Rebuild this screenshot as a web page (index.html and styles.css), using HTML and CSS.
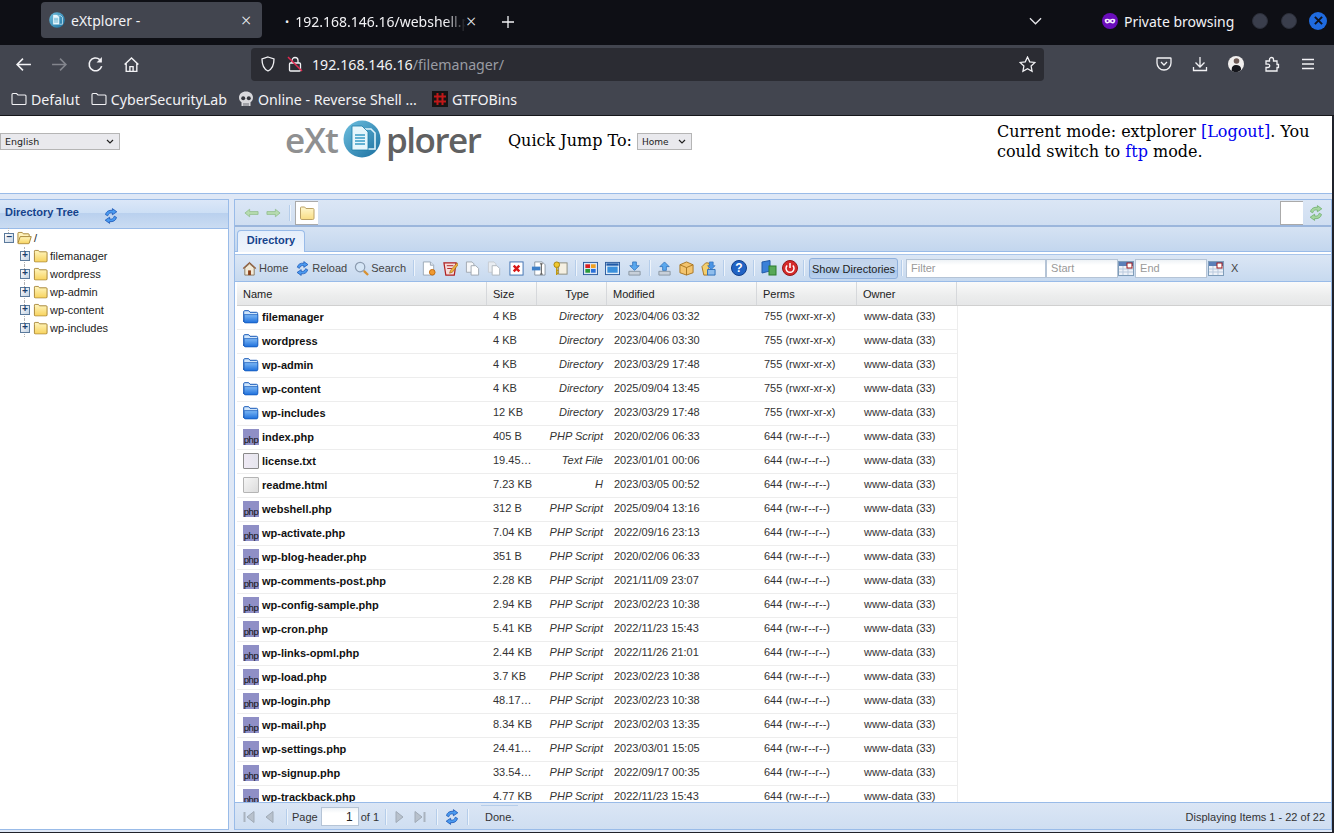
FILE: index.html
```html
<!DOCTYPE html>
<html lang="en">
<head>
<meta charset="utf-8">
<title>eXtplorer</title>
<link rel="stylesheet" href="styles.css">
</head>
<body>
<svg class="defs" width="0" height="0" aria-hidden="true">
  <defs>
    <linearGradient id="gy" x1="0" y1="0" x2="0" y2="1"><stop offset="0" stop-color="#fff6c0"/><stop offset="1" stop-color="#f7d25c"/></linearGradient>
    <linearGradient id="gb" x1="0" y1="0" x2="0" y2="1"><stop offset="0" stop-color="#7db8f5"/><stop offset="1" stop-color="#1d6fdc"/></linearGradient>
    <linearGradient id="gd" x1="0" y1="0" x2="1" y2="1"><stop offset="0" stop-color="#6fc0e0"/><stop offset="1" stop-color="#1a6f9f"/></linearGradient>
    <symbol id="folder" viewBox="0 0 16 14"><path d="M1.5 3V1.8q0-.8.8-.8h3.4l1.2 1.5h7q1.100 0 1.100 1v8.700q0 1.300-1.300 1.300H2.800q-1.300 0-1.300-1.300z" fill="url(#gy)" stroke="#a58334"/></symbol>
    <symbol id="folderopen" viewBox="0 0 16 14"><path d="M1 12V2q0-1 1-1h3.500l1.200 1.500H12q1 0 1 1V5" fill="#fff3bd" stroke="#a58334"/><path d="M1 12.500 3.400 5.500h11.800L13 12.500q-.3.700-1 .7H2q-1 0-1-.7z" fill="url(#gy)" stroke="#a58334"/></symbol>
    <symbol id="bfolder" viewBox="0 0 16 14"><path d="M.7 11.700V1.700q0-1 1-1h4l1.300 1.600h6.400q1.200 0 1.200 1.100v7.300q0 1.600-1.600 1.600H2.300q-1.600 0-1.600-1.600z" fill="#cfe5fb" stroke="#1458b8"/><path d="M1.200 4.600h13.600v7q0 1.300-1.300 1.300H2.500q-1.300 0-1.300-1.300z" fill="url(#gb)" stroke="#1458b8" stroke-width=".7"/></symbol>
    <symbol id="reload" viewBox="0 0 16 16"><path d="M2.500 6.600C3 3.600 6 1.800 9.400 2.400V.6l4.400 3.200-4.400 3V5C7 4.400 5.300 5.600 4.700 7.800z" fill="#4a9af0" stroke="#1a55b5" stroke-width=".8"/><path d="M13.500 9.400c-.5 3-3.500 4.800-6.900 4.200v1.800L2.200 12.200l4.400-3V11c2.400.6 4.100-.6 4.700-2.800z" fill="#4a9af0" stroke="#1a55b5" stroke-width=".8"/></symbol>
    <symbol id="greload" viewBox="0 0 16 16"><path d="M2.500 6.600C3 3.600 6 1.800 9.400 2.400V.6l4.400 3.200-4.400 3V5C7 4.400 5.300 5.600 4.700 7.800z" fill="#a5d6a0" stroke="#6fae6c" stroke-width=".8"/><path d="M13.500 9.400c-.5 3-3.500 4.800-6.900 4.200v1.800L2.200 12.200l4.400-3V11c2.400.6 4.100-.6 4.700-2.800z" fill="#a5d6a0" stroke="#6fae6c" stroke-width=".8"/></symbol>
    <symbol id="doc" viewBox="0 0 16 16"><path d="M2.500 1h7.500l3.500 3.500V15h-11z" fill="#fff" stroke="#9aa7b5"/><path d="M10 1v3.500h3.500" fill="#dfe6ee" stroke="#9aa7b5"/></symbol>
    <symbol id="logodoc" viewBox="0 0 38 38"><circle cx="19" cy="19" r="18.500" fill="url(#gd)"/><path d="M22 9h6l4 4v16h-7" fill="none" stroke="#dff3fb" stroke-width="1.600"/><path d="M9 6h10l6 6v18H9z" fill="#e6f6fc" stroke="#1c7da8" stroke-width=".8"/><path d="M12 15h10M12 18h10M12 21h10M12 24h10" stroke="#3a9cc5" stroke-width="1.300"/></symbol>
    <symbol id="cal" viewBox="0 0 16 16"><rect x=".5" y="1.500" width="15" height="14" fill="#eef2f8" stroke="#7f9db9"/><rect x="1" y="2" width="14" height="4" fill="#5b7fb8"/><path d="M1 9h14M1 12h14M5 6v9M10 6v9" stroke="#b9c9dd"/><rect x="9" y="3" width="5" height="5" fill="#fff" stroke="#a01818"/></symbol>
    <symbol id="first" viewBox="0 0 16 16"><path d="M3.500 3v10" stroke="#a9b3bf" stroke-width="2"/><path d="M13 2.500v11L6 8z" fill="#b8c1cc" stroke="#a0aab6"/></symbol>
    <symbol id="prev" viewBox="0 0 16 16"><path d="M11 2.500v11L4 8z" fill="#b8c1cc" stroke="#a0aab6"/></symbol>
    <symbol id="next" viewBox="0 0 16 16"><path d="M5 2.500v11L12 8z" fill="#b8c1cc" stroke="#a0aab6"/></symbol>
    <symbol id="last" viewBox="0 0 16 16"><path d="M12.500 3v10" stroke="#a9b3bf" stroke-width="2"/><path d="M3 2.500v11L10 8z" fill="#b8c1cc" stroke="#a0aab6"/></symbol>
  </defs>
</svg>

<div class="browser">
  <div class="tabbar">
    <div class="tab tab-active">
      <svg class="fav" viewBox="0 0 38 38"><use href="#logodoc"/></svg>
      <span class="tab-title">eXtplorer -</span>
      <span class="tab-x">×</span>
    </div>
    <div class="tab tab-idle">
      <span class="tab-dot">•</span>
      <span class="tab-title fade">192.168.146.16/webshell.php</span>
      <span class="tab-x">×</span>
    </div>
    <svg class="newtab" viewBox="0 0 12 12"><path d="M6 0v12M0 6h12" stroke="#f2f2f5" stroke-width="1.300"/></svg>
    <svg class="chev" viewBox="0 0 14 8"><path d="M1 1l6 6 6-6" fill="none" stroke="#e6e6ea" stroke-width="1.400"/></svg>
    <svg class="mask" viewBox="0 0 16 16"><circle cx="8" cy="8" r="8" fill="#6a0dbb"/><path d="M2.800 6.400c1.500-.8 3.600-.7 5.200.1 1.600-.8 3.700-.9 5.200-.1.600 2.300-.7 4-2.600 4-1.200 0-1.900-1-2.600-1s-1.400 1-2.600 1c-1.900 0-3.200-1.700-2.600-4z" fill="#f4ecfb"/><circle cx="5.500" cy="8" r="1" fill="#6a0dbb"/><circle cx="10.500" cy="8" r="1" fill="#6a0dbb"/></svg>
    <span class="private">Private browsing</span>
    <span class="winbtn"></span>
    <span class="winbtn"></span>
    <span class="winbtn winclose"><svg viewBox="0 0 10 10"><path d="M1 1l8 8M9 1l-8 8" stroke="#10131c" stroke-width="2.200"/></svg></span>
  </div>

  <div class="navbar">
    <svg class="nav-ico" viewBox="0 0 16 16"><path d="M15 8H2M7.500 2.500 2 8l5.500 5.500" fill="none" stroke="#f2f2f5" stroke-width="1.500"/></svg>
    <svg class="nav-ico" viewBox="0 0 16 16"><path d="M1 8h13M8.500 2.500 14 8l-5.500 5.500" fill="none" stroke="#83858d" stroke-width="1.500"/></svg>
    <svg class="nav-ico" viewBox="0 0 16 16"><path d="M13.800 9.500A6 6 0 1 1 12 3.400" fill="none" stroke="#f2f2f5" stroke-width="1.500"/><path d="M14 1v5H9z" fill="#f2f2f5"/></svg>
    <svg class="nav-ico" viewBox="0 0 16 16"><path d="M1.500 8 8 1.800 14.500 8M3 7v7.500h10V7M6.500 14.500V10h3v4.500" fill="none" stroke="#f2f2f5" stroke-width="1.300"/></svg>
    <div class="urlbar">
      <svg class="url-ico" viewBox="0 0 16 16"><path d="M8 1l6 2c0 6-1.500 10-6 12C3.500 13 2 9 2 3z" fill="none" stroke="#f2f2f5" stroke-width="1.300"/></svg>
      <svg class="url-ico" viewBox="0 0 16 16"><rect x="2.500" y="7" width="11" height="8" rx="1" fill="none" stroke="#f2f2f5" stroke-width="1.300"/><path d="M5 7V4.500a3 3 0 0 1 6 0V7" fill="none" stroke="#f2f2f5" stroke-width="1.300"/><path d="M1 1l14 14" stroke="#e22850" stroke-width="1.500"/></svg>
      <span class="url"><span class="url-host">192.168.146.16</span>/filemanager/</span>
      <svg class="url-star" viewBox="0 0 16 16"><path d="M8 1l2.100 4.500 4.900.6-3.600 3.400.9 4.900L8 11.900 3.700 14.400l.9-4.900L1 6.100l4.900-.6z" fill="none" stroke="#f2f2f5" stroke-width="1.200"/></svg>
    </div>
    <div class="nav-right">
      <svg class="nav-ico2" viewBox="0 0 16 16"><path d="M1.500 2h13q.5 0 .5.5V7a7 7 0 0 1-14 0V2.500q0-.5.500-.5z" fill="none" stroke="#f2f2f5" stroke-width="1.300"/><path d="M5 6l3 3 3-3" fill="none" stroke="#f2f2f5" stroke-width="1.300"/></svg>
      <svg class="nav-ico2" viewBox="0 0 16 16"><path d="M8 1v10M3.500 6.500 8 11l4.500-4.500M1.500 11v3.500h13V11" fill="none" stroke="#f2f2f5" stroke-width="1.300"/></svg>
      <svg class="nav-ico2" viewBox="0 0 16 16"><circle cx="8" cy="8" r="8" fill="#f1efee"/><path d="M3.800 15c-.5-4 1-6 4.200-6s5.500 1.500 5 5a8 8 0 0 1-9.200 1z" fill="#15161c"/><circle cx="8.500" cy="5" r="2.800" fill="#6d5a55"/></svg>
      <svg class="nav-ico2" viewBox="0 0 16 16"><path d="M2 5h3.500V3.500a2 2 0 0 1 4 0V5H13v3.500h1.500v3H13V15H2v-3.500h2a1.700 1.700 0 0 0 0-3.400H2z" fill="none" stroke="#f2f2f5" stroke-width="1.300"/></svg>
      <svg class="nav-ico2" viewBox="0 0 16 16"><path d="M2 3.500h12M2 8h12M2 12.500h12" stroke="#f2f2f5" stroke-width="1.300"/></svg>
    </div>
  </div>

  <div class="bookmarks">
    <span class="bm"><svg class="bm-ico" viewBox="0 0 16 14"><path d="M1 2.500q0-1 1-1h3.500L7 3h7q1 0 1 1v7.500q0 1-1 1H2q-1 0-1-1z" fill="none" stroke="#f2f2f5" stroke-width="1.100"/></svg>Defalut</span>
    <span class="bm"><svg class="bm-ico" viewBox="0 0 16 14"><path d="M1 2.500q0-1 1-1h3.500L7 3h7q1 0 1 1v7.500q0 1-1 1H2q-1 0-1-1z" fill="none" stroke="#f2f2f5" stroke-width="1.100"/></svg>CyberSecurityLab</span>
    <span class="bm"><svg class="bm-ico" viewBox="0 0 16 16"><path d="M8 .5c4 0 7 2.500 7 6.200 0 2.300-1.200 3.700-2.500 4.500V15h-9v-3.800C2.200 10.400 1 9 1 6.700 1 3 4 .5 8 .5z" fill="#d8d8dc"/><circle cx="5.200" cy="7.200" r="2" fill="#34363d"/><circle cx="10.800" cy="7.200" r="2" fill="#34363d"/><path d="M6 12v3M8 12v3M10 12v3" stroke="#6a6c74"/></svg>Online - Reverse Shell ...</span>
    <span class="bm"><svg class="bm-ico" viewBox="0 0 16 16"><rect width="16" height="16" fill="#151515"/><path d="M5.500 2v12M10.500 2v12M2 5.500h12M2 10.500h12" stroke="#c01818" stroke-width="2"/></svg>GTFOBins</span>
  </div>

  <div class="page">
    <header class="head">
      <div class="head-lang">
        <select class="lang"><option>English</option></select>
      </div>
      <div class="logo">
        <span class="logo-a">eXt</span>
        <svg class="logo-mark" viewBox="0 0 38 38"><use href="#logodoc"/></svg>
        <span class="logo-b">plorer</span>
      </div>
      <div class="jump">Quick Jump To:<select class="jump-sel"><option>Home</option></select></div>
      <div class="mode">Current mode: extplorer <a class="lnk">[Logout]</a>. You could switch to <a class="lnk">ftp</a> mode.</div>
    </header>

    <div class="workspace">
      <aside class="tree-panel">
        <div class="tree-head">
          <span class="tree-title">Directory Tree</span>
          <svg class="tree-reload" viewBox="0 0 16 16"><use href="#reload"/></svg>
        </div>
        <div class="tree-body">
          <div class="node root"><span class="exp">−</span><svg class="t-folder" viewBox="0 0 16 14"><use href="#folderopen"/></svg><span>/</span></div>
          <div class="node"><span class="exp">+</span><svg class="t-folder" viewBox="0 0 16 14"><use href="#folder"/></svg><span>filemanager</span></div>
          <div class="node"><span class="exp">+</span><svg class="t-folder" viewBox="0 0 16 14"><use href="#folder"/></svg><span>wordpress</span></div>
          <div class="node"><span class="exp">+</span><svg class="t-folder" viewBox="0 0 16 14"><use href="#folder"/></svg><span>wp-admin</span></div>
          <div class="node"><span class="exp">+</span><svg class="t-folder" viewBox="0 0 16 14"><use href="#folder"/></svg><span>wp-content</span></div>
          <div class="node"><span class="exp">+</span><svg class="t-folder" viewBox="0 0 16 14"><use href="#folder"/></svg><span>wp-includes</span></div>
        </div>
      </aside>

      <main class="main">
        <div class="locbar">
          <svg class="loc-arrow" viewBox="0 0 16 10"><path d="M1 5l5-4v2.500h9v3H6V9z" fill="#b7dcb0" stroke="#8dbb88" stroke-width=".8"/></svg>
          <svg class="loc-arrow" viewBox="0 0 16 10"><path d="M15 5l-5-4v2.500H1v3h9V9z" fill="#b7dcb0" stroke="#8dbb88" stroke-width=".8"/></svg>
          <span class="sep loc-sep"></span>
          <span class="loc-box"><svg class="loc-folder" viewBox="0 0 16 14"><use href="#folder"/></svg></span>
          <span class="loc-space"></span>
          <span class="loc-box2"></span>
          <svg class="loc-reload" viewBox="0 0 16 16"><use href="#greload"/></svg>
        </div>

        <div class="tabstrip"><span class="dir-tab">Directory</span></div>

        <div class="toolbar">
          <span class="tb-btn tb-home"><svg class="ti" viewBox="0 0 16 16"><path d="M1 8 8 1.500 15 8" fill="#c46a3a" stroke="#7a4a2a"/><path d="M3 7.500 8 3l5 4.500V15H3z" fill="#f2ead8" stroke="#8a7a60"/><rect x="6.500" y="10" width="3" height="5" fill="#8a3f1a"/></svg>Home</span>
          <span class="tb-btn"><svg class="ti" viewBox="0 0 16 16"><use href="#reload"/></svg>Reload</span>
          <span class="tb-btn"><svg class="ti" viewBox="0 0 16 16"><circle cx="6.500" cy="6.500" r="5" fill="#d6e6f6" stroke="#8c9cb0" stroke-width="1.300"/><path d="M10.500 10.500 15 15" stroke="#d89030" stroke-width="2.400"/></svg>Search</span>
          <span class="sep"></span>
          <span class="ib"><svg class="ti" viewBox="0 0 16 16"><use href="#doc"/><circle cx="12" cy="12" r="3" fill="#f09a30" stroke="#c06a10"/></svg></span>
          <span class="ib"><svg class="ti" viewBox="0 0 16 16"><path d="M1 2h13l-2 13H3z" fill="#f6dcdc" stroke="#b02020" stroke-width="1.300"/><path d="M4 5h7M4.500 8h5" stroke="#b02020"/><path d="M15 2 8 10l-1 3 3-1 6-8z" fill="#f0b040" stroke="#a06a10" stroke-width=".7"/></svg></span>
          <span class="ib"><svg class="ti" viewBox="0 0 16 16"><path d="M1.500 1h6l2 2v9h-8z" fill="#f6f7f9" stroke="#a0a8b0"/><path d="M6.500 5h5l3 3v7h-8z" fill="#fff" stroke="#a0a8b0"/></svg></span>
          <span class="ib"><svg class="ti" viewBox="0 0 16 16"><path d="M1.500 1h6l2 2v9h-8z" fill="#e9edf2" stroke="#c6ccd2"/><path d="M5.500 5h5l3 3v7h-8z" fill="#fff" stroke="#aeb5bc"/></svg></span>
          <span class="ib"><svg class="ti" viewBox="0 0 16 16"><rect x="1" y="1" width="14" height="14" fill="#fff" stroke="#3d6fb0"/><path d="M5 5l6 6M11 5l-6 6" stroke="#d81818" stroke-width="2.600"/></svg></span>
          <span class="ib"><svg class="ti" viewBox="0 0 16 16"><path d="M4 1h8l3 3v11H4z" fill="#fff" stroke="#8a96a2"/><rect x="1" y="6" width="9" height="4" fill="#3d7fc8"/><path d="M11 3v11M9.500 3h3M9.500 14h3" stroke="#444" fill="none"/></svg></span>
          <span class="ib"><svg class="ti" viewBox="0 0 16 16"><rect x="6" y="2" width="9" height="12" fill="#f5f0e2" stroke="#8a8a7a"/><circle cx="4" cy="4" r="3" fill="#f0c830" stroke="#a8820c"/><path d="M4 6v9M4 10h2M4 13h2" stroke="#c09810" stroke-width="1.600"/></svg></span>
          <span class="sep"></span>
          <span class="ib"><svg class="ti" viewBox="0 0 16 16"><rect x=".5" y="1.500" width="15" height="13" fill="#dfe8f4" stroke="#2a5a9c"/><rect x="2.500" y="3.500" width="5" height="4" fill="#d82020"/><rect x="8.500" y="3.500" width="5" height="4" fill="#f0a020"/><rect x="2.500" y="8.500" width="5" height="4" fill="#2a9a3a"/><rect x="8.500" y="8.500" width="5" height="4" fill="#2a70d8"/></svg></span>
          <span class="ib"><svg class="ti" viewBox="0 0 16 16"><rect x=".5" y="1.500" width="15" height="13" fill="#e4eef8" stroke="#2a5a9c"/><rect x="1.500" y="2.500" width="13" height="2.500" fill="#1e5aa8"/><rect x="2.500" y="6" width="11" height="6.500" fill="#3a90dc"/></svg></span>
          <span class="ib"><svg class="ti" viewBox="0 0 16 16"><path d="M6 1h4v4h3L8 10 3 5h3z" fill="#5aa8ee" stroke="#2a6cb8" stroke-width=".8"/><path d="M2 11h12v4H2z" fill="#c8d0da" stroke="#8a96a2"/></svg></span>
          <span class="sep"></span>
          <span class="ib"><svg class="ti" viewBox="0 0 16 16"><path d="M6 10h4V6h3L8 1 3 6h3z" fill="#5aa8ee" stroke="#2a6cb8" stroke-width=".8"/><path d="M2 11h12v4H2z" fill="#c8d0da" stroke="#8a96a2"/></svg></span>
          <span class="ib"><svg class="ti" viewBox="0 0 16 16"><path d="M1 4 8 1l7 3v8.500L8 15l-7-2.500z" fill="#f3c46e" stroke="#a87420"/><path d="M1 4l7 3 7-3M8 7v8" fill="none" stroke="#a87420"/></svg></span>
          <span class="ib"><svg class="ti" viewBox="0 0 16 16"><path d="M1 6l4-4h3l1 2-2 11H3z" fill="#f3cf6e" stroke="#a87420"/><path d="M7 9h8v6H7z" fill="#8fbdec" stroke="#2a6cb8"/><path d="M9 1h4v4h2l-4 4-4-4h2z" fill="#4a94e6" stroke="#2a6cb8" stroke-width=".7"/></svg></span>
          <span class="sep"></span>
          <span class="ib"><svg class="ti ti-l" viewBox="0 0 16 16"><circle cx="8" cy="8" r="7.500" fill="#2163c4" stroke="#123f8a"/><text class="help-q" x="8" y="12.200" text-anchor="middle">?</text></svg></span>
          <span class="sep"></span>
          <span class="ib ib-n"><svg class="ti ti-l" viewBox="0 0 16 16"><path d="M1 2l8-1.500V11L1 13z" fill="#3a80d8" stroke="#235aa8"/><rect x="8" y="6" width="7" height="9" fill="#58a858" stroke="#2d7d2d"/></svg></span>
          <span class="ib ib-n"><svg class="ti ti-l" viewBox="0 0 16 16"><circle cx="8" cy="8" r="7.500" fill="#d42a2a" stroke="#921616"/><path d="M5.200 5.500a4 4 0 1 0 5.600 0M8 3v5" fill="none" stroke="#fff" stroke-width="1.500"/></svg></span>
          <span class="sep"></span>
          <span class="tb-toggle">Show Directories</span>
          <span class="sep"></span>
          <input class="inp inp-filter" placeholder="Filter">
          <input class="inp inp-date" placeholder="Start">
          <svg class="cal" viewBox="0 0 16 16"><use href="#cal"/></svg>
          <input class="inp inp-date inp-end" placeholder="End">
          <svg class="cal" viewBox="0 0 16 16"><use href="#cal"/></svg>
          <span class="tb-x">X</span>
        </div>

        <div class="grid">
          <div class="grid-head">
            <span class="hc c-name">Name</span>
            <span class="hc c-size">Size</span>
            <span class="hc c-type hc-r">Type</span>
            <span class="hc c-mod">Modified</span>
            <span class="hc c-perm">Perms</span>
            <span class="hc c-own">Owner</span>
          </div>
          <div class="grid-body">
            <div class="row"><span class="c c-name"><svg class="ficon" viewBox="0 0 16 14"><use href="#bfolder"/></svg><b>filemanager</b></span><span class="c c-size">4 KB</span><span class="c c-type">Directory</span><span class="c c-mod">2023/04/06 03:32</span><span class="c c-perm">755 (rwxr-xr-x)</span><span class="c c-own">www-data (33)</span></div>
            <div class="row"><span class="c c-name"><svg class="ficon" viewBox="0 0 16 14"><use href="#bfolder"/></svg><b>wordpress</b></span><span class="c c-size">4 KB</span><span class="c c-type">Directory</span><span class="c c-mod">2023/04/06 03:30</span><span class="c c-perm">755 (rwxr-xr-x)</span><span class="c c-own">www-data (33)</span></div>
            <div class="row"><span class="c c-name"><svg class="ficon" viewBox="0 0 16 14"><use href="#bfolder"/></svg><b>wp-admin</b></span><span class="c c-size">4 KB</span><span class="c c-type">Directory</span><span class="c c-mod">2023/03/29 17:48</span><span class="c c-perm">755 (rwxr-xr-x)</span><span class="c c-own">www-data (33)</span></div>
            <div class="row"><span class="c c-name"><svg class="ficon" viewBox="0 0 16 14"><use href="#bfolder"/></svg><b>wp-content</b></span><span class="c c-size">4 KB</span><span class="c c-type">Directory</span><span class="c c-mod">2025/09/04 13:45</span><span class="c c-perm">755 (rwxr-xr-x)</span><span class="c c-own">www-data (33)</span></div>
            <div class="row"><span class="c c-name"><svg class="ficon" viewBox="0 0 16 14"><use href="#bfolder"/></svg><b>wp-includes</b></span><span class="c c-size">12 KB</span><span class="c c-type">Directory</span><span class="c c-mod">2023/03/29 17:48</span><span class="c c-perm">755 (rwxr-xr-x)</span><span class="c c-own">www-data (33)</span></div>
            <div class="row"><span class="c c-name"><span class="php">php</span><b>index.php</b></span><span class="c c-size">405 B</span><span class="c c-type">PHP Script</span><span class="c c-mod">2020/02/06 06:33</span><span class="c c-perm">644 (rw-r--r--)</span><span class="c c-own">www-data (33)</span></div>
            <div class="row"><span class="c c-name"><span class="txt"></span><b>license.txt</b></span><span class="c c-size">19.45…</span><span class="c c-type">Text File</span><span class="c c-mod">2023/01/01 00:06</span><span class="c c-perm">644 (rw-r--r--)</span><span class="c c-own">www-data (33)</span></div>
            <div class="row"><span class="c c-name"><span class="txt htm"></span><b>readme.html</b></span><span class="c c-size">7.23 KB</span><span class="c c-type">H</span><span class="c c-mod">2023/03/05 00:52</span><span class="c c-perm">644 (rw-r--r--)</span><span class="c c-own">www-data (33)</span></div>
            <div class="row"><span class="c c-name"><span class="php">php</span><b>webshell.php</b></span><span class="c c-size">312 B</span><span class="c c-type">PHP Script</span><span class="c c-mod">2025/09/04 13:16</span><span class="c c-perm">644 (rw-r--r--)</span><span class="c c-own">www-data (33)</span></div>
            <div class="row"><span class="c c-name"><span class="php">php</span><b>wp-activate.php</b></span><span class="c c-size">7.04 KB</span><span class="c c-type">PHP Script</span><span class="c c-mod">2022/09/16 23:13</span><span class="c c-perm">644 (rw-r--r--)</span><span class="c c-own">www-data (33)</span></div>
            <div class="row"><span class="c c-name"><span class="php">php</span><b>wp-blog-header.php</b></span><span class="c c-size">351 B</span><span class="c c-type">PHP Script</span><span class="c c-mod">2020/02/06 06:33</span><span class="c c-perm">644 (rw-r--r--)</span><span class="c c-own">www-data (33)</span></div>
            <div class="row"><span class="c c-name"><span class="php">php</span><b>wp-comments-post.php</b></span><span class="c c-size">2.28 KB</span><span class="c c-type">PHP Script</span><span class="c c-mod">2021/11/09 23:07</span><span class="c c-perm">644 (rw-r--r--)</span><span class="c c-own">www-data (33)</span></div>
            <div class="row"><span class="c c-name"><span class="php">php</span><b>wp-config-sample.php</b></span><span class="c c-size">2.94 KB</span><span class="c c-type">PHP Script</span><span class="c c-mod">2023/02/23 10:38</span><span class="c c-perm">644 (rw-r--r--)</span><span class="c c-own">www-data (33)</span></div>
            <div class="row"><span class="c c-name"><span class="php">php</span><b>wp-cron.php</b></span><span class="c c-size">5.41 KB</span><span class="c c-type">PHP Script</span><span class="c c-mod">2022/11/23 15:43</span><span class="c c-perm">644 (rw-r--r--)</span><span class="c c-own">www-data (33)</span></div>
            <div class="row"><span class="c c-name"><span class="php">php</span><b>wp-links-opml.php</b></span><span class="c c-size">2.44 KB</span><span class="c c-type">PHP Script</span><span class="c c-mod">2022/11/26 21:01</span><span class="c c-perm">644 (rw-r--r--)</span><span class="c c-own">www-data (33)</span></div>
            <div class="row"><span class="c c-name"><span class="php">php</span><b>wp-load.php</b></span><span class="c c-size">3.7 KB</span><span class="c c-type">PHP Script</span><span class="c c-mod">2023/02/23 10:38</span><span class="c c-perm">644 (rw-r--r--)</span><span class="c c-own">www-data (33)</span></div>
            <div class="row"><span class="c c-name"><span class="php">php</span><b>wp-login.php</b></span><span class="c c-size">48.17…</span><span class="c c-type">PHP Script</span><span class="c c-mod">2023/02/23 10:38</span><span class="c c-perm">644 (rw-r--r--)</span><span class="c c-own">www-data (33)</span></div>
            <div class="row"><span class="c c-name"><span class="php">php</span><b>wp-mail.php</b></span><span class="c c-size">8.34 KB</span><span class="c c-type">PHP Script</span><span class="c c-mod">2023/02/03 13:35</span><span class="c c-perm">644 (rw-r--r--)</span><span class="c c-own">www-data (33)</span></div>
            <div class="row"><span class="c c-name"><span class="php">php</span><b>wp-settings.php</b></span><span class="c c-size">24.41…</span><span class="c c-type">PHP Script</span><span class="c c-mod">2023/03/01 15:05</span><span class="c c-perm">644 (rw-r--r--)</span><span class="c c-own">www-data (33)</span></div>
            <div class="row"><span class="c c-name"><span class="php">php</span><b>wp-signup.php</b></span><span class="c c-size">33.54…</span><span class="c c-type">PHP Script</span><span class="c c-mod">2022/09/17 00:35</span><span class="c c-perm">644 (rw-r--r--)</span><span class="c c-own">www-data (33)</span></div>
            <div class="row"><span class="c c-name"><span class="php">php</span><b>wp-trackback.php</b></span><span class="c c-size">4.77 KB</span><span class="c c-type">PHP Script</span><span class="c c-mod">2022/11/23 15:43</span><span class="c c-perm">644 (rw-r--r--)</span><span class="c c-own">www-data (33)</span></div>
          </div>
        </div>

        <div class="pager">
          <svg class="pg" viewBox="0 0 16 16"><use href="#first"/></svg>
          <svg class="pg" viewBox="0 0 16 16"><use href="#prev"/></svg>
          <span class="sep sep-a"></span>
          <span class="pg-t">Page</span>
          <input class="pg-inp" value="1">
          <span class="pg-t">of 1</span>
          <span class="sep sep-b"></span>
          <svg class="pg" viewBox="0 0 16 16"><use href="#next"/></svg>
          <svg class="pg" viewBox="0 0 16 16"><use href="#last"/></svg>
          <span class="sep sep-c"></span>
          <svg class="pg" viewBox="0 0 16 16"><use href="#reload"/></svg>
          <span class="sep sep-d"></span>
          <span class="pg-done">Done.</span>
          <span class="pg-info">Displaying Items 1 - 22 of 22</span>
        </div>
      </main>
    </div>
  </div>
</div>
</body>
</html>
```
FILE: styles.css
```css
* { box-sizing: border-box; }
html, body { margin: 0; height: 100%; overflow: hidden; }
body { font-family: "Liberation Sans", Arial, sans-serif; font-size: 11px; color: #222; background: #fff; }
.defs { display: block; height: 0; }
.browser { display: flex; flex-direction: column; height: 833px; width: 1334px; background: #42454f; }

/* tab bar */
.tabbar { height: 45px; flex: none; background: #0e0f15; display: flex; align-items: center; padding-left: 41px; font-family: "Noto Sans", sans-serif; font-size: 14px; color: #f2f2f5; }
.tab { display: flex; align-items: center; height: 36px; border-radius: 4px; }
.tab-active { width: 221px; background: #42454f; padding: 0 11px 0 8px; margin-top: -5px; }
.tab-idle { width: 197px; margin-left: 20px; padding: 0 3px 0 0; margin-top: -3px; }
.fav { width: 16px; height: 16px; margin-right: 6px; flex: none; }
.tab-title { flex: 1; white-space: nowrap; overflow: hidden; }
.fade { -webkit-mask-image: linear-gradient(90deg, #000 88%, transparent 100%); mask-image: linear-gradient(90deg, #000 88%, transparent 100%); }
.tab-dot { margin: 0 6px 0 3px; font-size: 11px; }
.tab-x { font-size: 18px; line-height: 1; width: 10px; text-align: center; font-weight: 300; }
.newtab { width: 12px; height: 12px; margin-left: 23px; margin-top: -2px; flex: none; }
.chev { width: 13px; height: 8px; margin-left: 515px; margin-top: -4px; flex: none; }
.mask { width: 16px; height: 16px; margin-left: 60px; margin-top: -4px; flex: none; }
.private { margin-left: 6px; margin-top: -3px; width: 110px; flex: none; white-space: nowrap; }
.winbtn { width: 16px; height: 16px; border-radius: 50%; background: #3a3e4c; margin-left: 18px; margin-top: -4px; flex: none; border: 1px solid #2c2f3a; }
.winbtn + .winbtn { margin-left: 13px; }
.winbtn.winclose { width: 18px; height: 18px; background: #1f6be0; border: 0; margin-left: 12px; display: flex; align-items: center; justify-content: center; }
.winclose svg { width: 9px; height: 9px; }

/* nav bar */
.navbar { height: 38px; flex: none; background: #42454f; display: flex; align-items: center; padding-left: 15px; }
.nav-ico { width: 17px; height: 17px; margin-right: 19px; flex: none; }
.urlbar { width: 793px; height: 33px; background: #2b2c33; border-radius: 4px; display: flex; align-items: center; padding: 0 8px; flex: none; }
.navbar > .urlbar { margin-left: 92px; }
.url-ico { width: 16px; height: 16px; margin-right: 6px; margin-left: 1px; flex: none; }
.url-ico + .url-ico { margin-left: 5px; margin-right: 9px; }
.url { font-family: "Noto Sans", sans-serif; font-size: 14.2px; color: #9a9ca3; flex: 1; }
.url-host { color: #f2f2f5; }
.url-star { width: 17px; height: 17px; flex: none; }
.nav-right { display: flex; align-items: center; margin-left: 112px; gap: 20px; }
.nav-ico2 { width: 16px; height: 16px; flex: none; }

/* bookmarks */
.bookmarks { height: 33px; flex: none; background: #42454f; display: flex; align-items: center; padding-left: 11px; font-family: "Noto Sans", sans-serif; font-size: 14.2px; color: #f2f2f5; border-bottom: 1px solid #15161a; }
.bm { display: flex; align-items: center; margin-right: 11px; white-space: nowrap; }
.bm + .bm + .bm + .bm { margin-left: 4px; }
.bm-ico { width: 16px; height: 16px; margin-right: 4px; flex: none; }

/* page */
.page { flex: 1; display: flex; flex-direction: column; background: #fff; min-height: 0; border-right: 2px solid #20222a; border-bottom: 1px solid #20222a; }
.head { height: 77px; flex: none; display: flex; font-family: "DejaVu Serif", serif; font-size: 16px; color: #000; }
.head-lang { width: 286px; padding-top: 17px; flex: none; }
.lang, .jump-sel { -webkit-appearance: none; appearance: none; height: 17px; background: #e9e9ed url("data:image/svg+xml,%3Csvg xmlns='http://www.w3.org/2000/svg' width='8' height='5'%3E%3Cpath d='M1 1l3 3 3-3' fill='none' stroke='%23222' stroke-width='1.200'/%3E%3C/svg%3E") no-repeat right 5px center; border: 1px solid #b5b5b5; border-radius: 0; color: #222; }
.lang { width: 120px; font: 9.5px "DejaVu Sans", sans-serif; padding: 0 0 0 4px; display: block; }
.logo { display: flex; align-items: center; height: 46px; width: 222px; flex: none; font-family: "Open Sans", sans-serif; font-size: 35px; font-weight: 600; letter-spacing: -1px; }
.logo-a { color: #8f9091; width: 57px; margin-left: -1px; margin-right: 1px; }
.logo-b { color: #606162; margin-left: 5px; letter-spacing: -1.500px; }
.logo-mark { width: 38px; height: 38px; flex: none; }
.jump { display: flex; align-items: center; height: 48px; width: 489px; flex: none; white-space: nowrap; }
.jump-sel { width: 55px; margin-left: 5px; font: 9px "DejaVu Sans", sans-serif; padding: 0 0 0 4px; margin-top: 3px; }
.mode { padding-top: 6px; width: 325px; line-height: 20px; }
.lnk { color: #0000ee; }

/* workspace */
.workspace { flex: 1; min-height: 0; display: flex; gap: 5px; background: #dfe8f6; border-top: 1px solid #99bbe8; padding: 5px 0 2px; }
.tree-panel { width: 229px; flex: none; display: flex; flex-direction: column; border: 1px solid #99bbe8; border-left: 0; background: #fff; }
.tree-head { height: 29px; flex: none; display: flex; align-items: center; padding-left: 5px; background: linear-gradient(180deg, #dbe7f8 0, #cddff5 45%, #b9d0ee 46%, #cadcf2 100%); border-bottom: 1px solid #99bbe8; }
.tree-title { font-weight: 700; color: #15428b; width: 98px; margin-top: -4px; }
.tree-reload { width: 16px; height: 16px; margin-top: 3px; }
.tree-body { flex: 1; background: #fff; }
.node { height: 18px; display: flex; align-items: center; padding-left: 20px; color: #222; position: relative; }
.node.root { padding-left: 4px; }
.node::before { content: ""; position: absolute; left: 24px; top: 0; bottom: 0; border-left: 1px dotted #b4b4b4; }
.node.root::before { left: 8px; top: -1px; bottom: 14px; }
.exp { position: relative; width: 10px; height: 10px; border: 1px solid #5b7a9c; background: linear-gradient(135deg, #fff, #c4d2e2); font: 700 10px/8px "Liberation Mono", monospace; text-align: center; color: #1b3f6b; flex: none; margin-right: 3px; }
.t-folder { width: 15px; height: 14px; margin-right: 2px; flex: none; }

/* main panel */
.main { flex: 1; min-width: 0; display: flex; flex-direction: column; border: 1px solid #99bbe8; background: #fff; }
.locbar { height: 27px; flex: none; display: flex; align-items: center; padding-left: 9px; background: linear-gradient(180deg, #dbe6f5, #cfdef1); border-bottom: 2px solid #9bb6dc; }
.loc-arrow { width: 15px; height: 10px; margin-right: 7px; flex: none; }
.sep { width: 1px; height: 16px; flex: none; background: #b5cdea; box-shadow: 1px 0 0 #eef4fb; }
.loc-sep { margin: 0 5px 0 1px; }
.loc-box { width: 23px; height: 24px; background: #fff; border: 1px solid #aaa; border-right: 0; display: flex; align-items: center; justify-content: center; margin-bottom: -1px; }
.loc-folder { width: 16px; height: 14px; opacity: .75; }
.loc-space { flex: 1; }
.loc-box2 { width: 23px; height: 24px; background: #fff; border: 1px solid #aaa; border-right: 0; margin-bottom: -1px; }
.loc-reload { width: 16px; height: 16px; margin: 0 7px 0 5px; }

.tabstrip { height: 25px; flex: none; display: flex; align-items: flex-end; padding-left: 2px; background: linear-gradient(180deg, #d5e2f3, #c3d6ee); border-bottom: 1px solid #99bbe8; }
.dir-tab { width: 68px; height: 22px; margin-bottom: -1px; text-align: center; font-weight: 700; color: #15428b; padding-top: 3px; background: linear-gradient(180deg, #e4eefb, #f0f5fc); border: 1px solid #99bbe8; border-bottom: 0; border-radius: 4px 4px 0 0; }

.toolbar { height: 28px; flex: none; margin-top: 2px; display: flex; align-items: center; padding-left: 7px; color: #444; background: linear-gradient(180deg, #dbe6f5, #c7d9ef); border-top: 1px solid #a9c5ea; border-bottom: 1px solid #99bbe8; }
.tb-btn { display: flex; align-items: center; margin-right: 7px; }
.tb-btn .ti { margin-right: 2px; }
.ti { width: 15px; height: 15px; display: block; flex: none; }
.ti-l { width: 16px; height: 16px; }
.toolbar > .sep { margin: 0 7px 0 0; }
.ib { width: 22px; flex: none; display: flex; justify-content: flex-start; }
.ib.ib-n { width: 21px; }
.help-q { font: 700 12px "Liberation Sans", sans-serif; fill: #fff; }
.tb-toggle { height: 21px; width: 89px; margin: 0 3px 0 -2px; text-align: center; line-height: 20px; color: #222; border: 1px solid #8fb0dc; border-radius: 3px; background: linear-gradient(180deg, #c3d4ec 0, #c6d8ef 55%, #a7c6ea 56%, #bad1ee 100%); white-space: nowrap; }
.toolbar > .tb-toggle + .sep { margin-right: 4px; }
.inp { height: 19px; border: 1px solid #b5c4d6; background: linear-gradient(180deg, #eef2f6, #fff 30%); padding: 0 4px; font: 11px "Liberation Sans", sans-serif; color: #222; flex: none; border-radius: 0; outline: 0; }
.inp::placeholder { color: #999; opacity: 1; }
.inp-filter { width: 140px; }
.inp-date { width: 72px; }
.inp-end { margin-left: 1px; }
.cal { width: 16px; height: 18px; flex: none; }
.inp-end + .cal { margin-left: 1px; }
.tb-x { margin-left: 7px; color: #444; }

/* grid */
.grid { flex: 1; min-height: 0; display: flex; flex-direction: column; background: #fff; }
.grid-head { height: 24px; flex: none; display: flex; background: linear-gradient(180deg, #fafafa, #eceded 60%, #e6e7e8); border-bottom: 1px solid #d0d0d0; margin-left: 2px; }
.hc { display: block; line-height: 24px; padding-left: 6px; color: #222; border-right: 1px solid #d6d8db; }
.hc.hc-r { text-align: right; padding-right: 17px; }
.c-name { width: 250px; }
.c-size { width: 50px; }
.c-type { width: 70px; }
.c-mod { width: 150px; }
.c-perm { width: 100px; }
.c-own { width: 100px; }
.grid-body { flex: 1; min-height: 0; overflow: hidden; margin-left: 2px; }
.row { display: flex; width: 721px; height: 24px; border-bottom: 1px solid #ededed; border-right: 1px solid #ededed; }
.c { display: flex; align-items: center; padding-left: 6px; color: #333; white-space: nowrap; overflow: hidden; height: 19px; }
.c b { color: #111; }
.c.c-type { justify-content: flex-end; padding-right: 4px; font-style: italic; }
.c.c-mod { padding-left: 7px; }
.c.c-perm, .c.c-own { padding-left: 7px; }
.c.c-name { padding-left: 6px; height: 21px; }
.ficon { width: 16px; height: 14px; margin-right: 3px; flex: none; }
.php { width: 16px; height: 16px; margin-right: 3px; flex: none; background: #8f8fc6; color: #111; font: 9.5px/21px "Liberation Sans", sans-serif; text-align: center; overflow: hidden; letter-spacing: -.4px; }
.txt { width: 16px; height: 16px; margin-right: 3px; flex: none; background: linear-gradient(90deg, #efeaf5, #e6e6ee); border: 1px solid #8a8a8a; border-radius: 1px; }
.txt.htm { background: linear-gradient(135deg, #f6f6f6, #dcdcdc); border-color: #b4b4b4; }

/* pager */
.pager { height: 27px; flex: none; display: flex; align-items: center; padding: 1px 6px 0; color: #333; background: linear-gradient(180deg, #dbe6f5, #cfdef1); border-top: 1px solid #99bbe8; }
.pg { width: 16px; height: 16px; margin-right: 5px; flex: none; }
.pager > .sep-a { margin: 0 5px 0 3px; }
.pager > .sep-b { margin: 0 5px 0 6px; }
.pager > .sep-c { margin: 0 7px 0 3px; }
.pager > .sep-d { margin: 0 13px 0 2px; }
.pg-inp { width: 38px; height: 19px; margin: 0 2px 0 3px; border: 1px solid #b5c4d6; text-align: right; font: 12px "Liberation Sans", sans-serif; padding: 0 5px 0 0; color: #222; background: linear-gradient(180deg, #eef2f6, #fff 30%); outline: 0; }
.pg-done { padding: 5px 4px 0; height: 23px; border-top: 1px solid #b5cdea; }
.pg-info { margin-left: auto; }
```
